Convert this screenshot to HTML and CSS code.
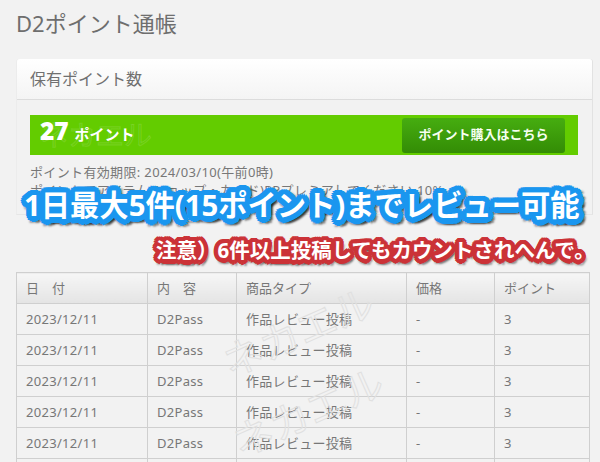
FILE: index.html
```html
<!DOCTYPE html>
<html lang="ja">
<head>
<meta charset="utf-8">
<title>D2ポイント通帳</title>
<link rel="stylesheet" href="styles.css">
</head>
<body>
<main class="page">
  <h1 class="title">D2ポイント通帳</h1>
  <section class="card">
    <h2 class="card-head">保有ポイント数</h2>
    <div class="card-body">
      <div class="bar">
        <p class="balance"><b class="balance-num">27</b> ポイント</p>
        <a class="buy">ポイント購入はこちら</a>
      </div>
      <p class="note">ポイント有効期限: 2024/03/10(午前0時)</p>
      <p class="note">ポイントでアイテム(ショップ・カード)PPプレミアしてください 10%</p>
    </div>
  </section>
  <table class="log">
    <thead>
      <tr><th class="c1">日　付</th><th class="c2">内　容</th><th class="c3">商品タイプ</th><th class="c4">価格</th><th class="c5">ポイント</th></tr>
    </thead>
    <tbody>
      <tr><td>2023/12/11</td><td>D2Pass</td><td>作品レビュー投稿</td><td>-</td><td>3</td></tr>
      <tr><td>2023/12/11</td><td>D2Pass</td><td>作品レビュー投稿</td><td>-</td><td>3</td></tr>
      <tr><td>2023/12/11</td><td>D2Pass</td><td>作品レビュー投稿</td><td>-</td><td>3</td></tr>
      <tr><td>2023/12/11</td><td>D2Pass</td><td>作品レビュー投稿</td><td>-</td><td>3</td></tr>
      <tr><td>2023/12/11</td><td>D2Pass</td><td>作品レビュー投稿</td><td>-</td><td>3</td></tr>
      <tr><td>2023/12/11</td><td>D2Pass</td><td>作品レビュー投稿</td><td>-</td><td>3</td></tr>
    </tbody>
  </table>
</main>
<div class="mark mark-bar">ネカエル</div>
<div class="mark mark-a">ネカエル</div>
<div class="mark mark-b">ネカエル</div>
<div class="caption-main">1日最大5件(15ポイント)までレビュー可能</div>
<div class="caption-sub">注意）6件以上投稿してもカウントされへんで。</div>
</body>
</html>
```
FILE: styles.css
```css
html, body { margin: 0; height: 462px; overflow: hidden; }
body {
  position: relative;
  background: #f2f2f2;
  color: #777;
  font-family: "Noto Sans", "Noto Sans CJK JP", sans-serif;
  font-size: 13px;
}
.page { padding: 9px 10px 0 16px; }
.title { margin: 0 0 22px; font-size: 22px; font-weight: 400; line-height: 28px; color: #6e6e6e; }
.card {
  width: 577px;
  height: 156px;
  box-sizing: border-box;
  margin-bottom: 57px;
  border-right: 1px solid #e2e2e2;
  border-left: 1px solid #ececec;
  border-bottom: 1px solid #e6e6e6;
  border-radius: 3px 3px 0 0;
}
.card-head {
  margin: 0;
  height: 41px;
  box-sizing: border-box;
  padding: 0 13px;
  font-size: 16px;
  font-weight: 400;
  line-height: 41px;
  color: #707070;
  background: linear-gradient(#fff, #f4f4f4);
  border-bottom: 1px solid #dcdcdc;
  border-radius: 3px 3px 0 0;
}
.card-body { padding: 15px 13px 0; }
.bar {
  display: flex;
  align-items: center;
  justify-content: space-between;
  height: 40px;
  width: 548px;
  box-sizing: border-box;
  padding: 0 13px 0 10px;
  background: #63cc00;
}
.balance { margin: 0 0 5px; color: #fff; font-size: 15px; font-weight: 700; line-height: 30px; }
.balance-num { font-size: 24.5px; margin-right: 2px; }
.buy {
  width: 163px;
  height: 35px;
  text-align: center;
  line-height: 32px;
  color: #f6fff0;
  font-size: 13px;
  font-weight: 700;
  background: linear-gradient(#46ad10, #338c05);
  border-radius: 3px;
}
.note { margin: 0; font-size: 13px; line-height: 18px; color: #777; white-space: nowrap; letter-spacing: .35px; }
.bar + .note { margin-top: 8px; }
.log { width: 574px; border-collapse: collapse; table-layout: fixed; }
.log th, .log td {
  border: 1px solid #cfcfcf;
  padding: 0 0 0 9px;
  text-align: left;
  font-size: 13px;
  font-weight: 400;
  color: #777;
  height: 30px;
  line-height: 18px;
  white-space: nowrap;
  letter-spacing: .3px;
}
.log th { background: linear-gradient(#f6f6f6, #e4e4e4); letter-spacing: 0; }
.c1 { width: 121px; }
.c2 { width: 79px; }
.c3 { width: 160px; }
.c4 { width: 78px; }
.mark {
  position: absolute;
  white-space: nowrap;
  font-weight: 400;
  color: transparent;
  -webkit-text-stroke: 1px #e0e0e0;
  font-size: 40px;
  line-height: 48px;
}
.mark-bar {
  left: 40px;
  top: 117px;
  font-size: 28px;
  line-height: 36px;
  color: rgba(255,255,255,.05);
  -webkit-text-stroke: 1px rgba(255,255,255,.12);
}
.mark-a { left: 218px; top: 308px; transform: rotate(-24deg); }
.mark-b { left: 228px; top: 388px; transform: rotate(-24deg); }
.caption-main, .caption-sub {
  position: absolute;
  white-space: nowrap;
  font-weight: 700;
  color: #fff;
}
.caption-main {
  left: 24px;
  top: 186px;
  font-size: 29.3px;
  line-height: 38px;
  text-shadow:
    3px 0 #1a96ef, -3px 0 #1a96ef, 0 3px #1a96ef, 0 -3px #1a96ef,
    2px 2px #1a96ef, -2px 2px #1a96ef, 2px -2px #1a96ef, -2px -2px #1a96ef,
    5.5px 0 #1a96ef, -5.5px 0 #1a96ef, 0 5.5px #1a96ef, 0 -5.5px #1a96ef,
    5px 2px #1a96ef, -5px 2px #1a96ef, 5px -2px #1a96ef, -5px -2px #1a96ef,
    2px 5px #1a96ef, -2px 5px #1a96ef, 2px -5px #1a96ef, -2px -5px #1a96ef,
    4px 4px #1a96ef, -4px 4px #1a96ef, 4px -4px #1a96ef, -4px -4px #1a96ef,
    7px 3px 2px rgba(0,0,0,.45), 3px 7px 2px rgba(0,0,0,.45), 6px 6px 2px rgba(0,0,0,.45),
    -2px 7px 2px rgba(0,0,0,.35), 7px -2px 2px rgba(0,0,0,.35);
}
.caption-sub {
  left: 156px;
  top: 236px;
  font-size: 20.5px;
  line-height: 28px;
  text-shadow:
    2px 0 #cb3237, -2px 0 #cb3237, 0 2px #cb3237, 0 -2px #cb3237,
    4.5px 0 #cb3237, -4.5px 0 #cb3237, 0 4.5px #cb3237, 0 -4.5px #cb3237,
    4px 2px #cb3237, -4px 2px #cb3237, 4px -2px #cb3237, -4px -2px #cb3237,
    2px 4px #cb3237, -2px 4px #cb3237, 2px -4px #cb3237, -2px -4px #cb3237,
    3px 3px #cb3237, -3px 3px #cb3237, 3px -3px #cb3237, -3px -3px #cb3237,
    5px 3px 2px rgba(0,0,0,.4), 3px 6px 2px rgba(0,0,0,.4), -1px 6px 2px rgba(0,0,0,.3);
}
```
